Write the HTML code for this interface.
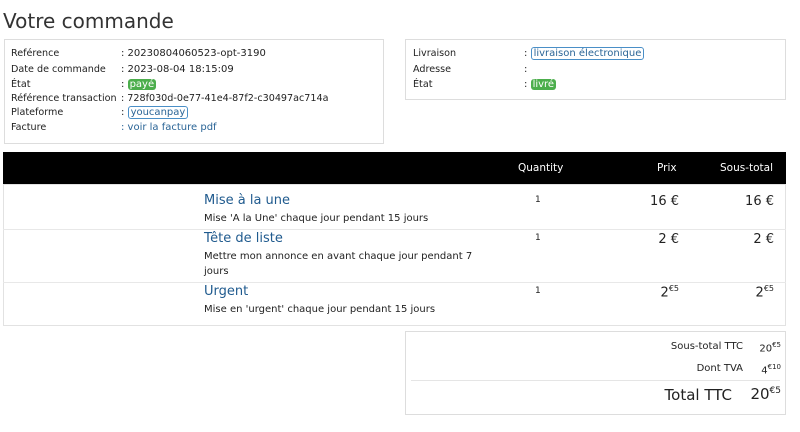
<!DOCTYPE html>
<html><head><meta charset="utf-8"><style>
*{margin:0;padding:0;box-sizing:border-box}
body{width:800px;height:432px;background:#fff;font-family:"DejaVu Sans","Liberation Sans",sans-serif;color:#222;position:relative;overflow:hidden}
.a{position:absolute;white-space:nowrap}
.box{position:absolute;border:1px solid #ddd}
.s{font-size:9.6px;line-height:13px}
.v{font-size:10px;line-height:13px}
.lnk{color:#2a6496}
.g{background:#4cae4c;color:#fff;border-radius:3px;padding:0 2px}
.o{border:1px solid #4a8fc7;color:#2a6496;border-radius:3px;padding:0 2px}
.t{font-size:13px;color:#1f5a8e}
.d{font-size:10px}
.p{font-size:13px;text-align:right}
sup{font-size:8px}
</style></head><body>
<div class="a" style="left:3px;top:9px;font-size:20px;color:#333">Votre commande</div>

<div class="box" style="left:4px;top:39px;width:380px;height:105px"></div>
<div class="a s" style="left:11px;top:47px">Reférence</div><div class="a v" style="left:121px;top:47px">: 20230804060523-opt-3190</div>
<div class="a s" style="left:11px;top:63px">Date de commande</div><div class="a v" style="left:121px;top:63px">: 2023-08-04 18:15:09</div>
<div class="a s" style="left:11px;top:78px">État</div><div class="a v" style="left:121px;top:78px">: <span class="g">payé</span></div>
<div class="a s" style="left:11px;top:92px">Référence transaction</div><div class="a v" style="left:121px;top:92px;font-size:9.6px">: 728f030d-0e77-41e4-87f2-c30497ac714a</div>
<div class="a s" style="left:11px;top:106px">Plateforme</div><div class="a v" style="left:121px;top:106px">: <span class="o">youcanpay</span></div>
<div class="a s" style="left:11px;top:121px">Facture</div><div class="a v lnk" style="left:121px;top:121px">: voir la facture pdf</div>

<div class="box" style="left:405px;top:39px;width:381px;height:61px"></div>
<div class="a s" style="left:413px;top:47px">Livraison</div><div class="a v" style="left:524px;top:47px">: <span class="o">livraison électronique</span></div>
<div class="a s" style="left:413px;top:63px">Adresse</div><div class="a v" style="left:524px;top:63px">:</div>
<div class="a s" style="left:413px;top:78px">État</div><div class="a v" style="left:524px;top:78px">: <span class="g">livré</span></div>

<div class="a" style="left:3px;top:152px;width:783px;height:33px;background:#000"></div>
<div class="a" style="left:518px;top:162px;color:#fff;font-size:10.5px">Quantity</div>
<div class="a" style="left:657px;top:162px;color:#fff;font-size:10.5px">Prix</div>
<div class="a" style="left:720px;top:162px;color:#fff;font-size:10.5px">Sous-total</div>

<div class="box" style="left:3px;top:184px;width:783px;height:142px;border-color:#e2e2e2"></div>
<div class="a" style="left:3px;top:229px;width:783px;height:1px;background:#e8e8e8"></div>
<div class="a" style="left:3px;top:282px;width:783px;height:1px;background:#e8e8e8"></div>

<div class="a t" style="left:204px;top:193px">Mise à la une</div>
<div class="a d" style="left:204px;top:213px">Mise 'A la Une' chaque jour pendant 15 jours</div>
<div class="a" style="left:535px;top:195px;font-size:9px">1</div>
<div class="a p" style="left:600px;width:79px;top:194px">16 €</div>
<div class="a p" style="left:700px;width:74px;top:194px">16 €</div>

<div class="a t" style="left:204px;top:231px">Tête de liste</div>
<div class="a d" style="left:204px;top:251px">Mettre mon annonce en avant chaque jour pendant 7</div>
<div class="a d" style="left:204px;top:266px">jours</div>
<div class="a" style="left:535px;top:233px;font-size:9px">1</div>
<div class="a p" style="left:600px;width:79px;top:232px">2 €</div>
<div class="a p" style="left:700px;width:74px;top:232px">2 €</div>

<div class="a t" style="left:204px;top:284px">Urgent</div>
<div class="a d" style="left:204px;top:304px">Mise en 'urgent' chaque jour pendant 15 jours</div>
<div class="a" style="left:535px;top:286px;font-size:9px">1</div>
<div class="a p" style="left:600px;width:79px;top:284px">2<sup>€5</sup></div>
<div class="a p" style="left:700px;width:74px;top:284px">2<sup>€5</sup></div>

<div class="box" style="left:405px;top:331px;width:381px;height:84px"></div>
<div class="a" style="left:600px;width:143px;top:341px;text-align:right;font-size:10px">Sous-total TTC</div>
<div class="a" style="left:750px;width:31px;top:341px;text-align:right;font-size:10px">20<sup style="font-size:7px">€5</sup></div>
<div class="a" style="left:600px;width:143px;top:363px;text-align:right;font-size:10px">Dont TVA</div>
<div class="a" style="left:750px;width:31px;top:363px;text-align:right;font-size:10px">4<sup style="font-size:7px">€10</sup></div>
<div class="a" style="left:411px;top:380px;width:369px;height:1px;background:#e5e5e5"></div>
<div class="a" style="left:600px;width:132px;top:386px;text-align:right;font-size:15px">Total TTC</div>
<div class="a" style="left:740px;width:41px;top:385px;text-align:right;font-size:15px">20<sup style="font-size:9px">€5</sup></div>
</body></html>
